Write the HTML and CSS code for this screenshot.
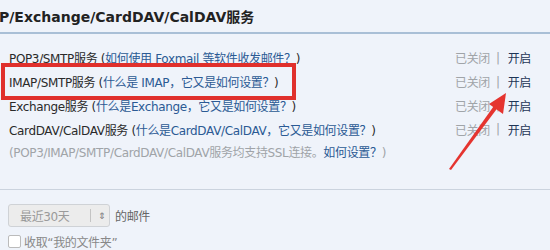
FILE: index.html
```html
<!DOCTYPE html>
<html>
<head>
<meta charset="utf-8">
<link rel="stylesheet" href="styles.css">
</head>
<body>
<div class="page">
  <div class="header"><h2 class="title">P/Exchange/CardDAV/CalDAV服务</h2></div>
  <div class="rows">
    <div class="row">
      <span class="label">POP3/SMTP服务 (<a class="link">如何使用 Foxmail 等软件收发邮件？</a>)</span>
      <span class="status"><span class="off">已关闭</span><span class="sep">|</span><a class="on">开启</a></span>
    </div>
    <div class="row">
      <span class="label">IMAP/SMTP服务 (<a class="link">什么是 IMAP，它又是如何设置？</a>)</span>
      <span class="status"><span class="off">已关闭</span><span class="sep">|</span><a class="on">开启</a></span>
    </div>
    <div class="row">
      <span class="label">Exchange服务 (<a class="link">什么是Exchange，它又是如何设置？</a>)</span>
      <span class="status"><span class="off">已关闭</span><span class="sep">|</span><a class="on">开启</a></span>
    </div>
    <div class="row">
      <span class="label">CardDAV/CalDAV服务 (<a class="link">什么是CardDAV/CalDAV，它又是如何设置？</a>)</span>
      <span class="status"><span class="off">已关闭</span><span class="sep">|</span><a class="on">开启</a></span>
    </div>
    <div class="note">(POP3/IMAP/SMTP/CardDAV/CalDAV服务均支持SSL连接。<a class="link">如何设置？</a>)</div>
  </div>
  <div class="divider"></div>
  <div class="opts">
    <div class="selrow">
      <div class="select"><span class="seltext">最近30天</span><span class="selbar"></span><span class="selarr">&#8661;</span></div>
      <span class="mailtxt">的邮件</span>
    </div>
    <div class="chkrow"><span class="chk"></span><span class="chktxt">收取“我的文件夹”</span></div>
  </div>
  <div class="redbox"></div>
  <svg class="arrow" width="550" height="250" viewBox="0 0 550 250">
    <polygon points="449,169 451,170 499,106 496,103" fill="#e5342f"/>
    <polygon points="506,93 489,104 503,114" fill="#e5342f"/>
  </svg>
</div>
</body>
</html>
```

FILE: styles.css
```css
html, body {
  margin: 0;
  padding: 0;
  background: #eff3fa;
}
.page {
  position: relative;
  width: 550px;
  height: 250px;
  overflow: hidden;
  font-family: "DejaVu Sans", "Noto Sans CJK SC", sans-serif;
  font-size: 12px;
  letter-spacing: -0.35px;
  color: #2a2a2a;
}
.header {
  height: 34px;
  border-bottom: 2px solid #a9bfd6;
  box-sizing: border-box;
  display: flex;
  align-items: center;
}
.title {
  margin: 0 0 0 -1px;
  font-size: 14px;
  font-weight: bold;
  letter-spacing: 0;
  color: #222;
  white-space: nowrap;
}
.rows {
  padding: 12px 19px 0 9px;
}
.row {
  display: flex;
  justify-content: space-between;
  align-items: center;
  height: 23.8px;
}
.link {
  color: #2b5a94;
}
.status {
  display: flex;
  align-items: center;
}
.off {
  color: #a0a4a8;
}
.sep {
  color: #a0a4a8;
  margin: 0 8px 0 6px;
}
.on {
  color: #1e3556;
}
.note {
  height: 24px;
  line-height: 24px;
  color: #a0a4a8;
}
.divider {
  margin-top: 24px;
  height: 1px;
  background: #cbd3de;
}
.opts {
  padding: 14px 0 0 8px;
}
.selrow {
  display: flex;
  align-items: center;
}
.select {
  width: 102px;
  height: 23px;
  box-sizing: border-box;
  border: 1px solid #cfd2d6;
  border-radius: 3px;
  background: #ececec;
  display: flex;
  align-items: center;
  color: #9a9a9a;
}
.seltext {
  padding-left: 11px;
  width: 70px;
}
.selbar {
  width: 1px;
  height: 13px;
  background: #c4c4c4;
}
.selarr {
  margin-left: 7px;
  font-size: 9px;
  color: #777;
}
.mailtxt {
  margin-left: 5px;
  color: #666;
}
.chkrow {
  display: flex;
  align-items: center;
  margin-top: 6px;
}
.chk {
  width: 13px;
  height: 13px;
  box-sizing: border-box;
  border: 1px solid #bbb;
  border-radius: 2px;
  background: #fff;
}
.chktxt {
  margin-left: 3px;
  color: #888;
}
.redbox {
  position: absolute;
  left: 1px;
  top: 63px;
  width: 295px;
  height: 37px;
  box-sizing: border-box;
  border: 4px solid #e0302c;
}
.arrow {
  position: absolute;
  left: 0;
  top: 0;
}
```
